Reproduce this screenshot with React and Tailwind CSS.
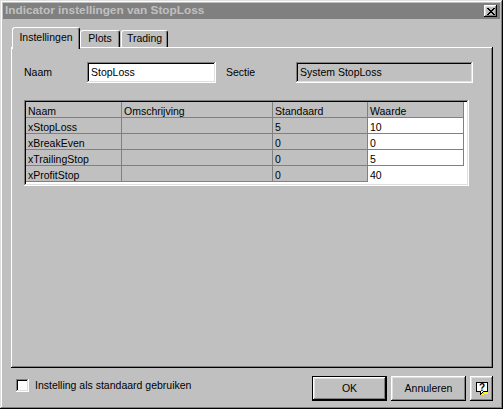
import React from 'react';

// Win98 bevels
const RAISED_WIN = 'shadow-[inset_-1px_-1px_#000,inset_1px_1px_#dfdfdf,inset_-2px_-2px_#808080,inset_2px_2px_#fff]';
const RAISED = 'shadow-[inset_-1px_-1px_#000,inset_1px_1px_#fff,inset_-2px_-2px_#808080,inset_2px_2px_#dfdfdf]';
const SUNKEN = 'shadow-[inset_-1px_-1px_#fff,inset_1px_1px_#808080,inset_-2px_-2px_#dfdfdf,inset_2px_2px_#000]';
const PANEL = 'shadow-[inset_-1px_-1px_#000,inset_1px_1px_#fff,inset_-2px_-2px_#808080]';

const COLS = [
  { label: 'Naam', w: 'w-[96px]' },
  { label: 'Omschrijving', w: 'w-[151px]' },
  { label: 'Standaard', w: 'w-[95px]' },
  { label: 'Waarde', w: 'w-[96px]' },
];

const ROWS = [
  ['xStopLoss', '', '5', '10'],
  ['xBreakEven', '', '0', '0'],
  ['xTrailingStop', '', '0', '5'],
  ['xProfitStop', '', '0', '40'],
];

export default function App() {
  return (
    <div className={`w-[503px] h-[409px] bg-[#c0c0c0] p-[3px] flex flex-col font-['Liberation_Sans',Arial,sans-serif] text-[10.5px] text-black ${RAISED_WIN}`}>
      {/* Title bar */}
      <div className="h-[16px] bg-[#808080] flex items-center justify-between pl-[2px] pr-[3px]">
        <span className="font-bold text-[11.8px] text-[#c0c0c0] leading-none">Indicator instellingen van StopLoss</span>
        <CloseButton />
      </div>

      <div className="flex flex-col pl-[8px] pt-[8px]">
        {/* Tabs */}
        <div className="flex items-end h-[20px] pl-[1px]">
          <Tab label="Instellingen" active w="w-[68px]" />
          <Tab label="Plots" w="w-[40px]" />
          <div className="w-[1px]" />
          <Tab label="Trading" w="w-[47px]" />
        </div>

        {/* Panel */}
        <div className={`w-[482px] h-[321px] pt-[15px] pl-[13px] ${PANEL}`}>
          <div className="flex items-center h-[21px]">
            <span className="w-[63px]">Naam</span>
            <div className={`w-[129px] h-[21px] bg-white flex items-center pl-[4px] ${SUNKEN}`}>StopLoss</div>
            <span className="ml-[10px] w-[70px]">Sectie</span>
            <div className={`w-[177px] h-[21px] bg-[#c0c0c0] flex items-center pl-[4px] ${SUNKEN}`}>System StopLoss</div>
          </div>

          <div className={`mt-[17px] w-[445px] h-[86px] bg-white p-[2px] ${SUNKEN}`}>
            <div className="flex">
              {COLS.map((c) => (
                <Cell key={c.label} w={c.w}>{c.label}</Cell>
              ))}
            </div>
            {ROWS.map((r, i) => (
              <div key={r[0]} className="flex">
                <Cell w={COLS[0].w}>{r[0]}</Cell>
                <Cell w={COLS[1].w}>{r[1]}</Cell>
                <Cell w={COLS[2].w}>{r[2]}</Cell>
                <Cell w={COLS[3].w} white focus={i === ROWS.length - 1}>{r[3]}</Cell>
              </div>
            ))}
          </div>
        </div>

        {/* Bottom row */}
        <div className="w-[482px] flex justify-between mt-[8px]">
          <div className="flex items-center mt-[3px] ml-[5px] h-[13px]">
            <div className={`w-[13px] h-[13px] bg-white ${SUNKEN}`} />
            <span className="ml-[6px]">Instelling als standaard gebruiken</span>
          </div>
          <div className="flex gap-[4px]">
            <div className="w-[75px] h-[25px] border border-black">
              <div className={`w-full h-full flex items-center justify-center ${RAISED}`}>OK</div>
            </div>
            <div className={`w-[75px] h-[25px] flex items-center justify-center ${RAISED}`}>Annuleren</div>
            <div className={`w-[23px] h-[25px] flex items-center justify-center ${RAISED}`}>
              <HelpIcon />
            </div>
          </div>
        </div>
      </div>
    </div>
  );
}

function Cell({ w, white, focus, children }) {
  const border = focus ? '' : 'border-r border-b border-[#808080]';
  return (
    <div className={`${w} h-[16px] ${border} ${white ? 'bg-white' : 'bg-[#c0c0c0]'} pl-[2px] leading-[19px] overflow-hidden whitespace-nowrap`}>
      {children}
    </div>
  );
}

function Tab({ label, active, w }) {
  return (
    <div
      className={`${w} ${active ? 'h-[22px] -mb-[2px] relative z-10' : 'h-[17px]'} bg-[#c0c0c0] border-l border-t border-r border-l-white border-t-white border-r-black rounded-t-[3px] shadow-[inset_-1px_0_#808080] flex items-center justify-center ${active ? 'pb-[2px]' : ''}`}
    >
      {label}
    </div>
  );
}

function CloseButton() {
  return (
    <div className={`w-[13px] h-[12px] bg-[#c0c0c0] flex items-center justify-center ${RAISED}`}>
      <svg width="8" height="7" viewBox="0 0 8 7" shapeRendering="crispEdges">
        <path d="M0 0h2v1h-2zM6 0h2v1h-2zM1 1h2v1h-2zM5 1h2v1h-2zM2 2h4v1h-4zM3 3h2v1h-2zM2 4h4v1h-4zM1 5h2v1h-2zM5 5h2v1h-2zM0 6h2v1h-2zM6 6h2v1h-2z" fill="#000" />
      </svg>
    </div>
  );
}

function HelpIcon() {
  return (
    <svg width="16" height="16" viewBox="0 0 16 16" shapeRendering="crispEdges">
      <path d="M2.5 1.5h11v9h-4l-3 3v-3h-4z" fill="#fff" stroke="#000" />
      <path d="M10 11h4v2h-4zM7 13h3v1h-3z" fill="#ffff00" />
      <text x="8" y="9.5" textAnchor="middle" fontSize="10" fontWeight="bold" fontFamily="Liberation Sans, Arial, sans-serif" fill="#000">?</text>
    </svg>
  );
}
